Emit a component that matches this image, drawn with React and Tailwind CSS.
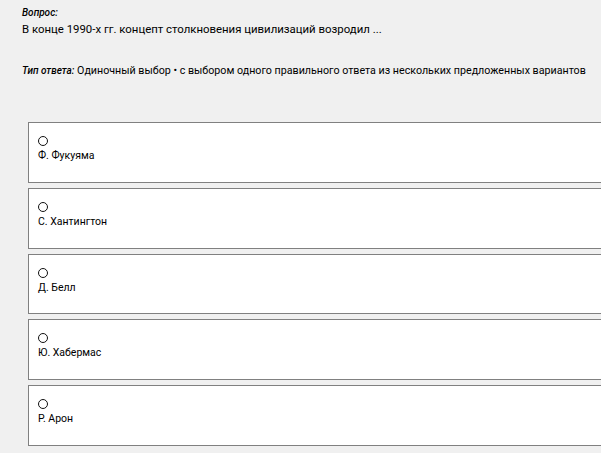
export default function App() {
  const options = ["Ф. Фукуяма", "С. Хантингтон", "Д. Белл", "Ю. Хабермас", "Р. Арон"];
  return (
    <div className="w-[601px] h-[453px] overflow-hidden bg-[#f0f0f0] text-[#000]" style={{ fontFamily: 'Roboto, "Open Sans", sans-serif' }}>
      <div className="pl-[22px] pt-[6px]">
        <div className="text-[10px] leading-[14px] font-medium italic">Вопрос:</div>
        <div className="text-[11.4px] leading-[18px]">В конце 1990-х гг. концепт столкновения цивилизаций возродил ...</div>
        <div className="mt-[25px] text-[10.7px] leading-[16px] whitespace-nowrap">
          <span className="font-medium italic text-[10px]">Тип ответа:</span> Одиночный выбор • с выбором одного правильного ответа из нескольких предложенных вариантов
        </div>
      </div>
      <div className="mt-[43px] ml-[28px] w-[600px] flex flex-col gap-[5px]">
        {options.map((o) => (
          <div key={o} className="h-[60.75px] bg-white border border-[#808080] pl-[9px] pt-[13px]">
            <div className="w-[10px] h-[10px] rounded-full border border-[#111]" />
            <div className="mt-[2px] text-[10.5px] leading-[15px]">{o}</div>
          </div>
        ))}
      </div>
    </div>
  );
}
